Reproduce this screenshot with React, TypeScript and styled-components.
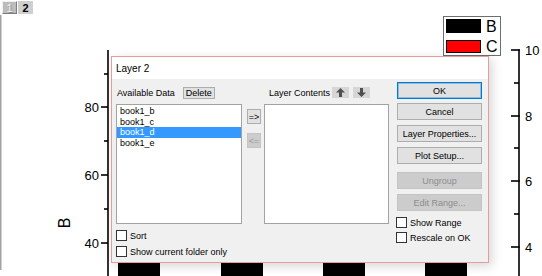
import React from "react";
import styled, { createGlobalStyle } from "styled-components";

const Global = createGlobalStyle`
  html, body { margin: 0; padding: 0; background: #fff; }
  body { font-family: "Liberation Sans", Arial, sans-serif; }
  #root { width: 542px; height: 276px; }
`;

const Stage = styled.div`
  position: relative;
  width: 542px;
  height: 276px;
  overflow: hidden;
  background: #fff;
`;

const ChartLayer = styled.svg`
  position: absolute;
  left: 0;
  top: 0;
  font-family: "Liberation Sans", Arial, sans-serif;
`;

const TabStrip = styled.div`
  position: relative;
  display: flex;
  gap: 1px;
  padding: 1px 0 0 2px;
`;

const PageTab = styled.div<{ $current?: boolean }>`
  box-sizing: border-box;
  width: 15px;
  height: 13px;
  display: flex;
  align-items: center;
  justify-content: center;
  font: bold 11px "Liberation Sans", Arial, sans-serif;
  background: ${(p) => (p.$current ? "#cfcfcf" : "#bcbcbc")};
  color: ${(p) => (p.$current ? "#000" : "#f4f4f4")};
  border: 1px solid;
  border-color: ${(p) =>
    p.$current ? "#cfcfcf" : "#efefef #7d7d7d #7d7d7d #efefef"};
  text-shadow: ${(p) => (p.$current ? "none" : "1px 1px 0 #8a8a8a")};
  font-weight: ${(p) => (p.$current ? "bold" : "normal")};
`;

const Dialog = styled.div`
  position: absolute;
  left: 111px;
  top: 56px;
  width: 378px;
  height: 207px;
  box-sizing: border-box;
  border: 1px solid #e39d9d;
  background: #f0f0f0;
  display: flex;
  flex-direction: column;
  box-shadow: 3px 3px 10px rgba(0, 0, 0, 0.16);
  font: 9px "Liberation Sans", Arial, sans-serif;
  color: #000;
`;

const TitleBar = styled.div`
  height: 22px;
  flex: none;
  background: #fff;
  display: flex;
  align-items: center;
  padding-left: 4px;
  font-size: 10px;
`;

const Body = styled.div`
  flex: 1;
  display: flex;
  align-items: flex-start;
  padding: 3px 6px 0 4px;
`;

const Column = styled.div<{ $w: number; $ml?: number; $pt?: number }>`
  width: ${(p) => p.$w}px;
  margin-left: ${(p) => p.$ml ?? 0}px;
  padding-top: ${(p) => p.$pt ?? 0}px;
  display: flex;
  flex-direction: column;
  flex: none;
`;

const LabelRow = styled.div<{ $gap: number; $pl: number }>`
  height: 12px;
  display: flex;
  align-items: flex-start;
  gap: ${(p) => p.$gap}px;
  padding-left: ${(p) => p.$pl}px;
`;

const LabelText = styled.span`
  line-height: 12px;
  white-space: nowrap;
`;

const SmallButton = styled.button<{ $w: number; $h: number }>`
  box-sizing: border-box;
  width: ${(p) => p.$w}px;
  height: ${(p) => p.$h}px;
  padding: 0;
  margin: 0;
  background: #e1e1e1;
  border: 1px solid #adadad;
  font: 9px "Liberation Sans", Arial, sans-serif;
  color: #000;
  display: flex;
  align-items: center;
  justify-content: center;
  &:disabled {
    background: #cccccc;
    border-color: #c4c4c4;
    color: #9a9a9a;
  }
`;

const OrderButton = styled.button`
  box-sizing: border-box;
  width: 17px;
  height: 11px;
  padding: 0;
  margin: 0;
  border: none;
  background: #d6d6d6;
  display: flex;
  align-items: center;
  justify-content: center;
`;

const ListBox = styled.div`
  box-sizing: border-box;
  margin-top: 5px;
  height: 120px;
  width: 100%;
  background: #fff;
  border: 1px solid #a3a3a3;
  padding-top: 1px;
`;

const ListItem = styled.div<{ $selected?: boolean }>`
  height: 10.5px;
  line-height: 10.5px;
  padding-left: 3px;
  white-space: nowrap;
  background: ${(p) => (p.$selected ? "#3399ff" : "transparent")};
  color: ${(p) => (p.$selected ? "#fff" : "#000")};
`;

const CheckRow = styled.label<{ $mt: number; $ml?: number }>`
  display: flex;
  align-items: center;
  gap: 3px;
  height: 11px;
  margin-top: ${(p) => p.$mt}px;
  margin-left: ${(p) => p.$ml ?? 0}px;
  white-space: nowrap;
`;

const CheckBox = styled.span`
  box-sizing: border-box;
  width: 11px;
  height: 11px;
  flex: none;
  border: 1px solid #333;
  background: #fff;
`;

const DlgButton = styled.button<{ $default?: boolean; $mt: number }>`
  box-sizing: border-box;
  width: 85px;
  height: 17px;
  margin: ${(p) => p.$mt}px 0 0 0;
  padding: 0;
  font: 9px "Liberation Sans", Arial, sans-serif;
  color: #000;
  background: #e1e1e1;
  border: 1px solid ${(p) => (p.$default ? "#0078d7" : "#adadad")};
  box-shadow: ${(p) =>
    p.$default ? "inset 0 0 0 1px rgba(0,120,215,0.35)" : "none"};
  &:disabled {
    background: #cccccc;
    border-color: #c4c4c4;
    color: #8c8c8c;
  }
`;

const Arrow = ({ down }: { down?: boolean }) => (
  <svg width="9" height="9" viewBox="0 0 9 9">
    <path
      d="M4.5 0 L9 4.5 L6 4.5 L6 9 L3 9 L3 4.5 L0 4.5 Z"
      fill="#505050"
      transform={down ? "rotate(180 4.5 4.5)" : undefined}
    />
  </svg>
);

const leftMajor = [
  { y: 107, t: "80" },
  { y: 175, t: "60" },
  { y: 243, t: "40" },
];
const leftMinor = [74, 141, 209];
const rightMajor = [
  { y: 50, t: "10" },
  { y: 116, t: "8" },
  { y: 181, t: "6" },
  { y: 247, t: "4" },
];
const rightMinor = [83, 148, 214];
const bars = [118, 221, 323, 425];

const Chart = () => (
  <ChartLayer width={542} height={276} viewBox="0 0 542 276">
    <rect x={0} y={15} width={1.5} height={255} fill="#a3a3a3" />
    {bars.map((x) => (
      <rect key={x} x={x} y={236} width={42} height={40} fill="#000" />
    ))}
    <line x1={108} y1={50} x2={108} y2={276} stroke="#000" strokeWidth={1.6} />
    {leftMajor.map((m) => (
      <g key={m.t}>
        <line x1={101} y1={m.y} x2={108} y2={m.y} stroke="#000" strokeWidth={1.6} />
        <text x={99} y={m.y + 5} fontSize={13} textAnchor="end" fill="#000">
          {m.t}
        </text>
      </g>
    ))}
    {leftMinor.map((y) => (
      <line key={y} x1={104} y1={y} x2={108} y2={y} stroke="#000" strokeWidth={1.6} />
    ))}
    <text
      x={0}
      y={0}
      fontSize={16}
      textAnchor="middle"
      fill="#000"
      transform="translate(69.5 223) rotate(-90)"
    >
      B
    </text>
    <line x1={519} y1={49.2} x2={519} y2={276} stroke="#000" strokeWidth={1.6} />
    {rightMajor.map((m) => (
      <g key={m.t}>
        <line x1={511} y1={m.y} x2={519.8} y2={m.y} stroke="#000" strokeWidth={1.6} />
        <text x={525} y={m.y + 4.5} fontSize={13} fill="#000">
          {m.t}
        </text>
      </g>
    ))}
    {rightMinor.map((y) => (
      <line key={y} x1={514} y1={y} x2={519} y2={y} stroke="#000" strokeWidth={1.6} />
    ))}
    <rect x={443.5} y={16.5} width={57} height={39} fill="#fff" stroke="#6e6e6e" />
    <rect x={446} y={19} width={35} height={14} fill="#000" />
    <text x={486} y={31.5} fontSize={16} fill="#000">
      B
    </text>
    <rect x={446.5} y={40.5} width={34} height={12} fill="#ff0000" stroke="#000" />
    <text x={486} y={52} fontSize={16} fill="#000">
      C
    </text>
  </ChartLayer>
);

export default function App() {
  return (
    <Stage>
      <Global />
      <Chart />
      <TabStrip>
        <PageTab>1</PageTab>
        <PageTab $current>2</PageTab>
      </TabStrip>
      <Dialog>
        <TitleBar>Layer 2</TitleBar>
        <Body>
          <Column $w={126} $pt={5}>
            <LabelRow $gap={8} $pl={1}>
              <LabelText>Available Data</LabelText>
              <SmallButton $w={32} $h={12}>Delete</SmallButton>
            </LabelRow>
            <ListBox>
              <ListItem>book1_b</ListItem>
              <ListItem>book1_c</ListItem>
              <ListItem $selected>book1_d</ListItem>
              <ListItem>book1_e</ListItem>
            </ListBox>
            <CheckRow $mt={6}>
              <CheckBox />
              Sort
            </CheckRow>
            <CheckRow $mt={5}>
              <CheckBox />
              Show current folder only
            </CheckRow>
          </Column>
          <Column $w={14} $ml={5} $pt={27}>
            <SmallButton $w={14} $h={15}>=&gt;</SmallButton>
            <div style={{ height: 9 }} />
            <SmallButton $w={14} $h={15} disabled>
              &lt;=
            </SmallButton>
          </Column>
          <Column $w={125} $ml={3} $pt={5}>
            <LabelRow $gap={2} $pl={5}>
              <LabelText>Layer Contents</LabelText>
              <OrderButton>
                <Arrow />
              </OrderButton>
              <OrderButton style={{ marginLeft: 2 }}>
                <Arrow down />
              </OrderButton>
            </LabelRow>
            <ListBox />
          </Column>
          <Column $w={85} $ml={8}>
            <DlgButton $default $mt={0}>OK</DlgButton>
            <DlgButton $mt={4}>Cancel</DlgButton>
            <DlgButton $mt={5}>Layer Properties...</DlgButton>
            <DlgButton $mt={5}>Plot Setup...</DlgButton>
            <DlgButton $mt={8} disabled>
              Ungroup
            </DlgButton>
            <DlgButton $mt={5} disabled>
              Edit Range...
            </DlgButton>
            <CheckRow $mt={6} $ml={-1}>
              <CheckBox />
              Show Range
            </CheckRow>
            <CheckRow $mt={4} $ml={-1}>
              <CheckBox />
              Rescale on OK
            </CheckRow>
          </Column>
        </Body>
      </Dialog>
    </Stage>
  );
}
